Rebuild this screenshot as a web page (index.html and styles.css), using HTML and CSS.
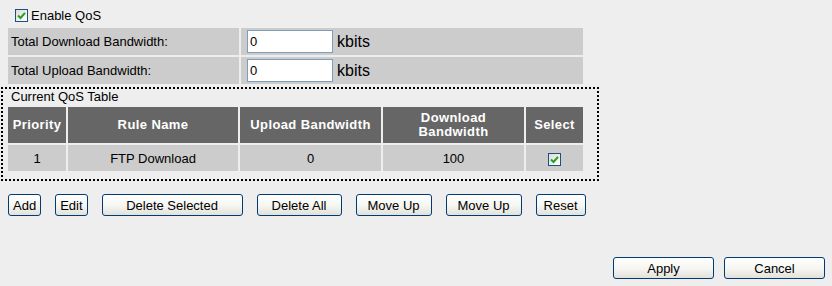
FILE: index.html
```html
<!DOCTYPE html>
<html lang="en">
<head>
    <meta charset="UTF-8">
    <title>QoS</title>
    <link rel="stylesheet" href="styles.css">
</head>
<body>

<div class="page">
    <label class="enable">
        <span class="check"><svg width="9" height="9" viewBox="0 0 9 9"><path d="M1 4.5 L3.5 7 L8 1.8" fill="none" stroke="#21a121" stroke-width="2"/></svg></span>
        Enable QoS
    </label>

    <table class="settings">
        <tr>
            <td class="label">Total Download Bandwidth:</td>
            <td class="value"><input class="bw" type="text" value="0"><span class="unit">kbits</span></td>
        </tr>
        <tr>
            <td class="label">Total Upload Bandwidth:</td>
            <td class="value"><input class="bw" type="text" value="0"><span class="unit">kbits</span></td>
        </tr>
    </table>

    <div class="qos-box">
        <div class="qos-title">Current QoS Table</div>
        <table class="qos-table">
            <tr>
                <th class="col-pri">Priority</th>
                <th class="col-name">Rule Name</th>
                <th class="col-bw">Upload Bandwidth</th>
                <th class="col-bw">Download<br>Bandwidth</th>
                <th class="col-sel">Select</th>
            </tr>
            <tr>
                <td>1</td>
                <td>FTP Download</td>
                <td>0</td>
                <td>100</td>
                <td><span class="check"><svg width="9" height="9" viewBox="0 0 9 9"><path d="M1 4.5 L3.5 7 L8 1.8" fill="none" stroke="#21a121" stroke-width="2"/></svg></span></td>
            </tr>
        </table>
    </div>

    <div class="actions">
        <button class="btn">Add</button>
        <button class="btn">Edit</button>
        <button class="btn btn-wide">Delete Selected</button>
        <button class="btn btn-mid">Delete All</button>
        <button class="btn btn-move">Move Up</button>
        <button class="btn btn-move">Move Up</button>
        <button class="btn btn-reset">Reset</button>
    </div>

    <div class="form-actions">
        <button class="btn btn-form">Apply</button>
        <button class="btn btn-form">Cancel</button>
    </div>
</div>

</body>
</html>
```

FILE: styles.css
```css
/* Global Styles */
body {
    margin: 0;
    background: #eeeeee;
    font-family: 'Liberation Sans', Arial, sans-serif;
    font-size: 13px;
    color: #000;
}

.page {
    padding: 0 6px;
}

/* checkbox look */
.check {
    display: inline-flex;
    align-items: center;
    justify-content: center;
    width: 13px;
    height: 13px;
    box-sizing: border-box;
    border: 1px solid #1c5180;
    background: linear-gradient(135deg, #dcdcd7, #ffffff);
    vertical-align: middle;
}

.enable {
    display: flex;
    align-items: center;
    gap: 3px;
    height: 22px;
    padding: 4px 0 0 9px;
}

/* bandwidth settings */
.settings {
    border-spacing: 2px;
    width: 579px;
}

.settings td {
    background: #cccccc;
    height: 27px;
    padding: 0;
    vertical-align: middle;
}

.settings .label {
    width: 228px;
    padding-left: 3px;
}

.settings .value {
    padding-left: 6px;
}

.bw {
    width: 86px;
    height: 23px;
    box-sizing: border-box;
    border: 1px solid #7f9db9;
    padding: 0 2px;
    font-family: inherit;
    font-size: 13px;
    vertical-align: middle;
}

.unit {
    font-size: 16px;
    margin-left: 4px;
    vertical-align: middle;
}

/* QoS table */
.qos-box {
    width: 598px;
    box-sizing: border-box;
    margin: 1px 0 0 -5px;
    padding: 0 0 6px 3px;
    border: 2px dotted #000;
}

.qos-title {
    height: 16px;
    line-height: 15px;
    padding-left: 5px;
}

.qos-table {
    border-spacing: 2px;
    width: 579px;
}

.qos-table th {
    background: #666666;
    color: #fff;
    font-weight: bold;
    letter-spacing: 0.4px;
    height: 36px;
    line-height: 14px;
    padding: 0;
}

.qos-table td {
    background: #cccccc;
    height: 26px;
    padding: 0;
    text-align: center;
}

.col-pri { width: 58px; }
.col-name { width: 170px; }
.col-bw { width: 141px; }

/* buttons */
.btn {
    height: 22px;
    box-sizing: border-box;
    padding: 0 4px;
    border: 1px solid #003c74;
    border-radius: 3px;
    background: linear-gradient(to bottom, #ffffff 0%, #f5f5f1 55%, #e2e1da 100%);
    font-family: inherit;
    font-size: 13px;
    color: #000;
    cursor: pointer;
}

.btn-wide { width: 141px; }
.btn-mid { width: 85px; }
.btn-move { width: 76px; }
.btn-reset { width: 50px; }
.btn-form { width: 101px; }

.actions {
    display: flex;
    gap: 14px;
    margin-top: 13px;
    padding-left: 2px;
}

.form-actions {
    display: flex;
    justify-content: flex-end;
    gap: 10px;
    margin-top: 41px;
    padding-right: 1px;
}
```
